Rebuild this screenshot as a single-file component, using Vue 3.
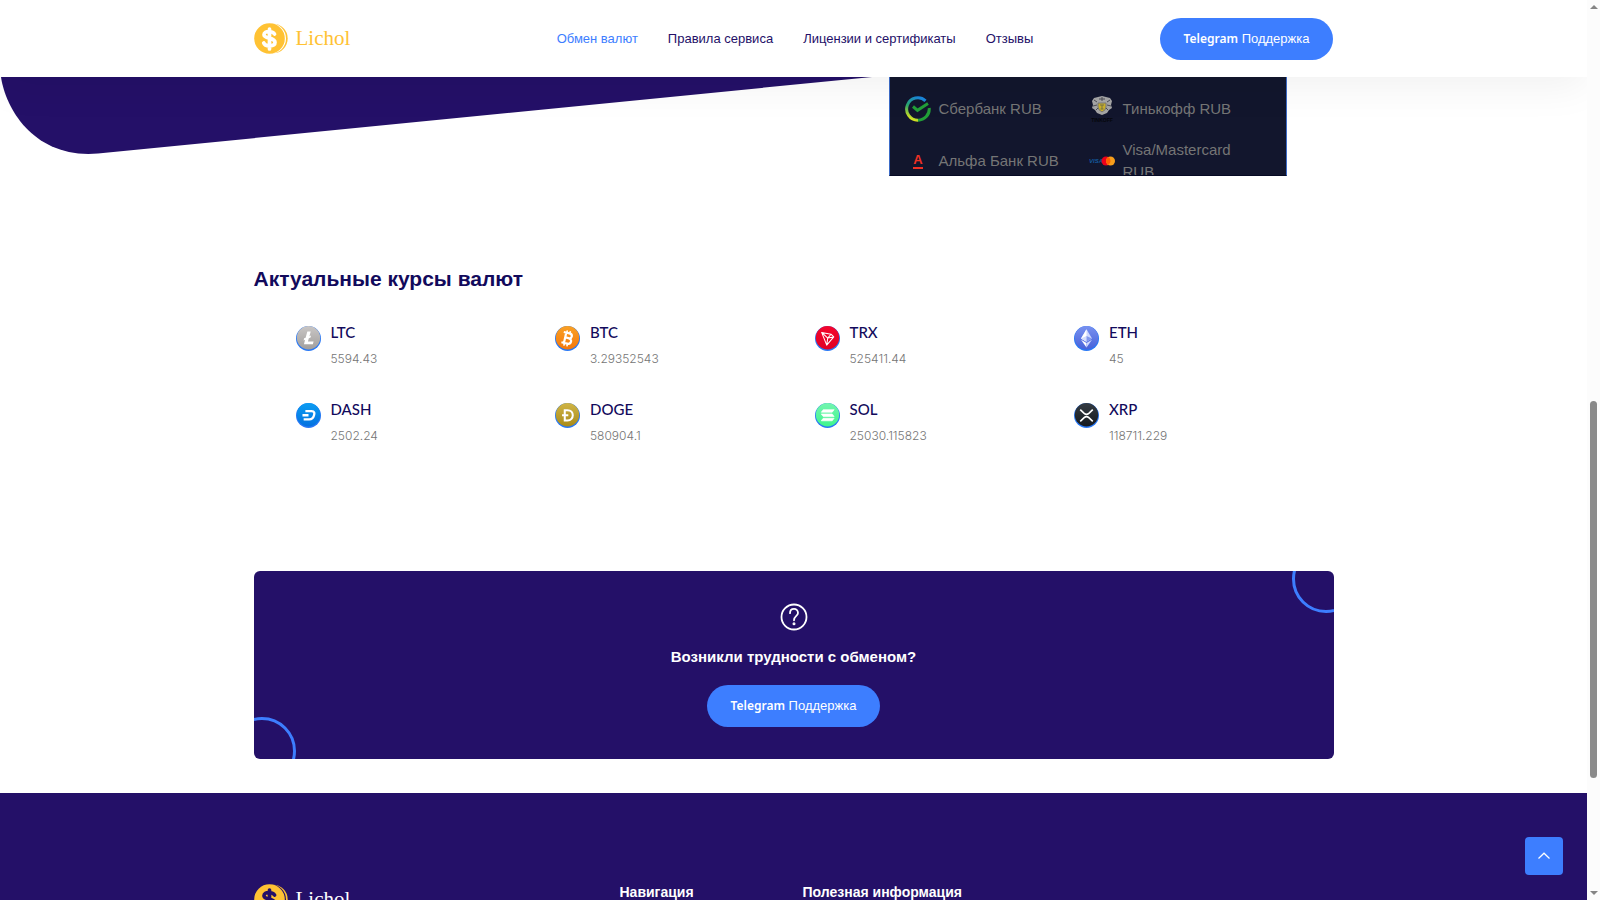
<template>
  <div class="screen">
    <div class="page">
      <header class="header">
        <div class="container header-row">
          <a href="#" class="logo">
            <svg class="logo-icon" viewBox="0 0 34 31" aria-hidden="true">
              <circle cx="19" cy="15.5" r="14.700" fill="#ffc233" />
              <circle cx="16.800" cy="15.5" r="15.200" class="logo-gap" />
              <circle cx="15.5" cy="15.5" r="15.300" fill="#ffc233" />
              <path :d="dollar" class="logo-mark" />
            </svg>
            <span>Lichol</span>
          </a>
          <nav class="nav">
            <a v-for="(item, i) in menu" :key="item" href="#" :class="{ active: i === 0 }">{{ item }}</a>
          </nav>
          <a href="#" class="btn"><span class="latin">Telegram</span> Поддержка</a>
        </div>
      </header>

      <!-- нижняя часть первого экрана -->
      <section class="hero">
        <svg class="hero-shape" viewBox="0 0 872 78" aria-hidden="true">
          <path d="M1 0C6 34 36 82 98 76.500L872 0Z" fill="#241068" />
        </svg>
        <div class="container">
          <ul class="banks">
            <li v-for="bank in banks" :key="bank.name">
              <svg viewBox="0 0 26 26" aria-hidden="true" v-html="bank.icon"></svg>
              <span>{{ bank.name }}</span>
            </li>
          </ul>
        </div>
      </section>

      <section class="rates container">
        <h2>Актуальные курсы валют</h2>
        <ul class="rates-grid">
          <li v-for="coin in coins" :key="coin.name" class="coin">
            <svg viewBox="0 0 32 32" aria-hidden="true">
              <defs>
                <linearGradient :id="'g-' + coin.name" x1="0" y1="0" x2="0" y2="1">
                  <stop offset="0" :stop-color="coin.from" />
                  <stop offset="1" :stop-color="coin.to" />
                </linearGradient>
              </defs>
              <circle cx="16" cy="16" r="16" fill="#2878f5" />
              <circle cx="16" cy="15" r="15" :fill="`url(#g-${coin.name})`" />
              <g v-html="coin.mark"></g>
            </svg>
            <div>
              <h3>{{ coin.name }}</h3>
              <p>{{ coin.value }}</p>
            </div>
          </li>
        </ul>
      </section>

      <section class="container">
        <div class="cta">
          <svg class="cta-icon" viewBox="0 0 28 28" fill="none" stroke="#fff" stroke-width="1.8" stroke-linecap="round" aria-hidden="true">
            <circle cx="14" cy="14" r="12.500" />
            <path d="M10 10.200C10 4.500 18 4.500 18 10C18 13 14 12.800 14 17.300" />
            <circle cx="14" cy="20.700" r="0.600" fill="#fff" />
          </svg>
          <h4>Возникли трудности с обменом?</h4>
          <a href="#" class="btn"><span class="latin">Telegram</span> Поддержка</a>
        </div>
      </section>

      <footer class="footer">
        <div class="container footer-row">
          <a href="#" class="logo logo-light">
            <svg class="logo-icon" viewBox="0 0 34 31" aria-hidden="true">
              <circle cx="19" cy="15.5" r="14.700" fill="#ffc233" />
              <circle cx="16.800" cy="15.5" r="15.200" class="logo-gap" />
              <circle cx="15.5" cy="15.5" r="15.300" fill="#ffc233" />
              <path :d="dollar" class="logo-mark" />
            </svg>
            <span>Lichol</span>
          </a>
          <h5>Навигация</h5>
          <h5>Полезная информация</h5>
        </div>
      </footer>

      <button class="to-top" type="button" aria-label="Наверх" @click="toTop">
        <svg viewBox="0 0 12 8" fill="none" stroke="#fff" stroke-width="1.2" aria-hidden="true">
          <path d="M0.500 6.500L6 1.200L11.500 6.500" />
        </svg>
      </button>
    </div>

    <div class="scroll" aria-hidden="true">
      <svg viewBox="0 0 8 4"><path d="M0 4L4 0L8 4Z" fill="#858585" /></svg>
      <div class="scroll-track"><div class="scroll-thumb"></div></div>
      <svg viewBox="0 0 8 4"><path d="M0 0L4 4L8 0Z" fill="#858585" /></svg>
    </div>
  </div>
</template>

<script setup>
const menu = ['Обмен валют', 'Правила сервиса', 'Лицензии и сертификаты', 'Отзывы'];

const dollar = 'M20.500 11C19 8 10 7.200 10 11.700C10 16 21 14.300 21 19.200C21 24 11 23.800 9.700 19.900M15.500 6V26';

const banks = [
  {
    name: 'Сбербанк RUB',
    icon: `<defs><linearGradient id="sber" x1="0.7" y1="0" x2="0.3" y2="1"><stop offset="0" stop-color="#1a86dc"/><stop offset="0.5" stop-color="#28a76c"/><stop offset="1" stop-color="#dfe51c"/></linearGradient></defs>
      <path d="M20.500 4.800A11.200 11.200 0 1 0 13 24.200" fill="none" stroke="url(#sber)" stroke-width="3"/>
      <path d="M24.200 12A11.200 11.200 0 0 1 13 24.200" fill="none" stroke="#22a038" stroke-width="3"/>
      <path d="M8 10.500L12.500 14.300L23 7.500" fill="none" stroke="#22a038" stroke-width="3"/>`
  },
  {
    name: 'Тинькофф RUB',
    icon: `<path d="M5 2L9 1L13 0L17 1L21 2L23 5L22 9L23 12L20 14L18 17L13 19L8 17L6 14L3 12L4 9L3 5Z" fill="#a5a5a5"/>
      <path d="M5 4L8 6M21 4L18 6M4 10L8 9M22 10L18 9M7 14L9 12M19 14L17 12M10 3H16M13 1V5" stroke="#4c4d55" stroke-width="1"/>
      <path d="M9 7H17V11Q17 14 13 16Q9 14 9 11Z" fill="#c9b02c" stroke="#777"/>
      <path d="M11 9H15M13 9V13M11.500 13H14.500" stroke="#777246" stroke-width="1"/>
      <text x="13" y="26" font-size="5" font-weight="700" font-family="Liberation Sans" text-anchor="middle" fill="#05060b">TINKOFF</text>`
  },
  {
    name: 'Альфа Банк RUB',
    icon: `<text x="13" y="16" font-size="13" font-weight="700" font-family="Liberation Sans" text-anchor="middle" fill="#ef3124">A</text>
      <path d="M8 19H18V21H8Z" fill="#ef3124"/>`
  },
  {
    name: 'Visa/Mastercard RUB',
    icon: `<text x="0" y="15" font-size="6" font-weight="700" font-style="italic" font-family="Liberation Sans" fill="#14599b">VISA</text>
      <circle cx="17" cy="13" r="4.500" fill="#eb001b"/><circle cx="21.500" cy="13" r="4.500" fill="#f79e1b"/>
      <path d="M19.250 9.100A4.500 4.500 0 0 1 19.250 16.900A4.500 4.500 0 0 1 19.250 9.100Z" fill="#ff5f00"/>`
  }
];

const coins = [
  {
    name: 'LTC',
    value: '5594.43',
    from: '#c9c6c5',
    to: '#a19e9c',
    mark: '<path d="M14.500 7H18.800L17.200 13L19.300 12.200L18.600 14.800L16.400 15.700L15.300 19.800H22.500L21.600 23.300H10.200L11.600 17.700L9.700 18.500L10.400 15.800L12.300 15Z" fill="#fff"/>'
  },
  {
    name: 'BTC',
    value: '3.29352543',
    from: '#faa124',
    to: '#f4770b',
    mark: '<g transform="rotate(13 16 16)" fill="none" stroke="#fff"><path d="M9.500 9H17C22 9 22 15.300 17 15.300H13M17 15.300C23 15.300 22.500 22.500 17 22.500H9.500M12.800 9V22.500" stroke-width="2.800"/><path d="M13.500 6V9M17.500 6V9M13.500 22.500V26M17.500 22.500V26" stroke-width="2"/></g>'
  },
  {
    name: 'TRX',
    value: '525411.44',
    from: '#f5052d',
    to: '#e00024',
    mark: '<path d="M8.500 8.200L20.500 10.500L24 14L15 24.500ZM8.500 8.200L16.300 15.500L15 24.500M16.300 15.500L20.500 10.500M16.300 15.500L24 14" fill="none" stroke="#fff" stroke-width="1.300" stroke-linejoin="round"/>'
  },
  {
    name: 'ETH',
    value: '45',
    from: '#7891f0',
    to: '#4862d9',
    mark: '<path d="M16 4L9 16L16 20L23 16Z" fill="#cfd8ff"/><path d="M16 4V20L9 16Z" fill="#fff"/><path d="M16 12.800L9 16L16 20Z" fill="#d4dcfc"/><path d="M16 12.800L23 16L16 20Z" fill="#8298ed"/><path d="M9 17.600L16 21.600V27.500Z" fill="#fff"/><path d="M23 17.600L16 21.600V27.500Z" fill="#cfd8ff"/>'
  },
  {
    name: 'DASH',
    value: '2502.24',
    from: '#0b9df2',
    to: '#0471df',
    mark: '<path d="M12 10.300H20C23.700 10.300 24 13 23 16C22 19.700 20.500 21 17 21H9.800M8.300 15.700H16" fill="none" stroke="#fff" stroke-width="3"/>'
  },
  {
    name: 'DOGE',
    value: '580904.1',
    from: '#d0b546',
    to: '#a98b19',
    mark: '<path d="M12.500 9.200H16C25 9.200 25 22.300 16 22.300H12.500ZM9 15.800H17" fill="none" stroke="#fff" stroke-width="2.600"/>'
  },
  {
    name: 'SOL',
    value: '25030.115823',
    from: '#74f5b0',
    to: '#3ff58c',
    mark: '<path d="M10.500 8.500H24.500L22 11.800H8ZM8 14H22L24.500 17.300H10.500ZM10.500 19.500H24.500L22 22.800H8Z" fill="#fff" stroke="#fff" stroke-width="0.800" stroke-linejoin="round"/>'
  },
  {
    name: 'XRP',
    value: '118711.229',
    from: '#343b43',
    to: '#15191d',
    mark: '<path d="M8 8.500L13 13.300Q16 16 19 13.300L24 8.500M8 23.500L13 18.700Q16 16 19 18.700L24 23.500" fill="none" stroke="#fff" stroke-width="2.100"/>'
  }
];

const toTop = () => {
  window.scrollTo({ top: 0, behavior: 'smooth' });
};
</script>

<style>
body {
  margin: 0;
  background: #fff;
}
</style>

<style scoped>
.screen {
  display: flex;
  height: 100vh;
  overflow: hidden;
  font-family: 'Liberation Sans', Arial, sans-serif;
  color: #757575;
}

.page {
  flex: 1;
  min-width: 0;
  position: relative;
  overflow: hidden;
}

.container {
  width: 100%;
  max-width: 1080px;
  margin: 0 auto;
}

a {
  text-decoration: none;
}

ul {
  list-style: none;
  margin: 0;
  padding: 0;
}

h2, h3, h4, h5, p {
  margin: 0;
}

/* шапка */
.header {
  position: relative;
  z-index: 2;
  background: #fff;
  box-shadow: 0 10px 40px rgba(0, 0, 0, 0.06);
}

.header-row {
  display: flex;
  align-items: center;
  justify-content: space-between;
  height: 77px;
}

.logo {
  display: flex;
  align-items: center;
  gap: 8px;
  font-family: 'Liberation Serif', 'Times New Roman', serif;
  font-size: 21px;
  line-height: 31px;
  color: #ffc233;
}

.logo-icon {
  width: 34px;
  height: 31px;
}

.logo-gap {
  fill: #fff;
}

.logo-mark {
  fill: none;
  stroke: #fff;
  stroke-width: 3.7;
  stroke-linecap: round;
}

.logo-light {
  color: #fff;
}

.logo-light .logo-gap {
  fill: #241068;
}

.logo-light .logo-mark {
  stroke: #241068;
}

.nav {
  display: flex;
  gap: 30px;
  margin-left: 80px;
}

.nav a {
  font-size: 13px;
  line-height: 18px;
  color: #241068;
}

.nav a.active {
  color: #3d7eff;
}

.btn {
  padding: 0 24px;
  border-radius: 21px;
  background: #3d7eff;
  color: #fff;
  font-size: 13px;
  line-height: 42px;
}

.latin {
  font-family: 'Noto Sans', sans-serif;
  font-weight: 600;
  font-size: 12px;
}

/* первый экран */
.hero {
  position: relative;
  height: 99px;
}

.hero-shape {
  position: absolute;
  top: 0;
  left: 0;
  width: 872px;
  height: 78px;
}

.hero .container {
  display: flex;
  justify-content: flex-end;
  height: 99px;
}

.banks {
  box-sizing: border-box;
  display: grid;
  grid-template-columns: 184px 156px;
  grid-auto-rows: 44px;
  row-gap: 8px;
  width: 398px;
  margin-right: 47px;
  padding: 10px 15px 0;
  overflow: hidden;
  background: #12162d;
  border: 1px solid #3d6cc8;
  border-top: 0;
  border-bottom-color: #060a24;
}

.banks li {
  display: flex;
  align-items: center;
  gap: 8px;
  font-size: 15px;
  line-height: 22px;
}

.banks svg {
  flex: none;
  width: 26px;
  height: 26px;
}

/* курсы */
.rates h2 {
  padding-top: 90px;
  font-size: 21px;
  line-height: 26px;
  color: #120a5c;
}

.rates-grid {
  display: grid;
  grid-template-columns: repeat(4, 1fr);
  row-gap: 26px;
  padding: 28px 0 123px 42px;
}

.coin {
  display: flex;
  gap: 10px;
}

.coin svg {
  width: 25px;
  height: 25px;
  margin-top: 6px;
}

.coin h3 {
  font-family: Lato, sans-serif;
  font-size: 15px;
  font-weight: 500;
  line-height: 24px;
  color: #120a5c;
}

.coin p {
  font-family: Inter, sans-serif;
  font-size: 12px;
  font-weight: 300;
  line-height: 24px;
  padding-top: 3px;
}

/* блок поддержки */
.cta {
  position: relative;
  display: flex;
  flex-direction: column;
  align-items: center;
  padding: 32px 0;
  overflow: hidden;
  border-radius: 6px;
  background: #241068;
}

.cta::before,
.cta::after {
  content: '';
  position: absolute;
  width: 62px;
  height: 62px;
  border: 3px solid #3d7eff;
  border-radius: 50%;
}

.cta::before {
  top: -26px;
  right: -26px;
}

.cta::after {
  bottom: -26px;
  left: -26px;
}

.cta-icon {
  width: 28px;
  height: 28px;
}

.cta h4 {
  padding: 14px 0 16px;
  font-size: 15px;
  line-height: 24px;
  color: #fff;
}

/* подвал */
.footer {
  margin-top: 34px;
  padding: 91px 0 80px;
  background: #241068;
}

.footer-row {
  display: grid;
  grid-template-columns: 366px 183px 1fr;
}

.footer-row h5 {
  font-size: 14px;
  line-height: 16px;
  color: #fff;
}

.to-top {
  position: absolute;
  right: 24px;
  bottom: 25px;
  display: flex;
  align-items: center;
  justify-content: center;
  width: 38px;
  height: 38px;
  padding: 0;
  border: 0;
  border-radius: 4px;
  background: #3d7eff;
  cursor: pointer;
}

.to-top svg {
  width: 12px;
  height: 8px;
}

/* полоса прокрутки */
.scroll {
  display: flex;
  flex-direction: column;
  align-items: center;
  width: 13px;
  padding: 5px 0;
  box-sizing: border-box;
  background: #fcfcfc;
}

.scroll svg {
  width: 8px;
  height: 4px;
}

.scroll-track {
  flex: 1;
  display: flex;
  flex-direction: column;
  justify-content: flex-end;
  padding-bottom: 113px;
}

.scroll-thumb {
  width: 7px;
  height: 49%;
  border-radius: 4px;
  background: #8a8a8a;
}
</style>
